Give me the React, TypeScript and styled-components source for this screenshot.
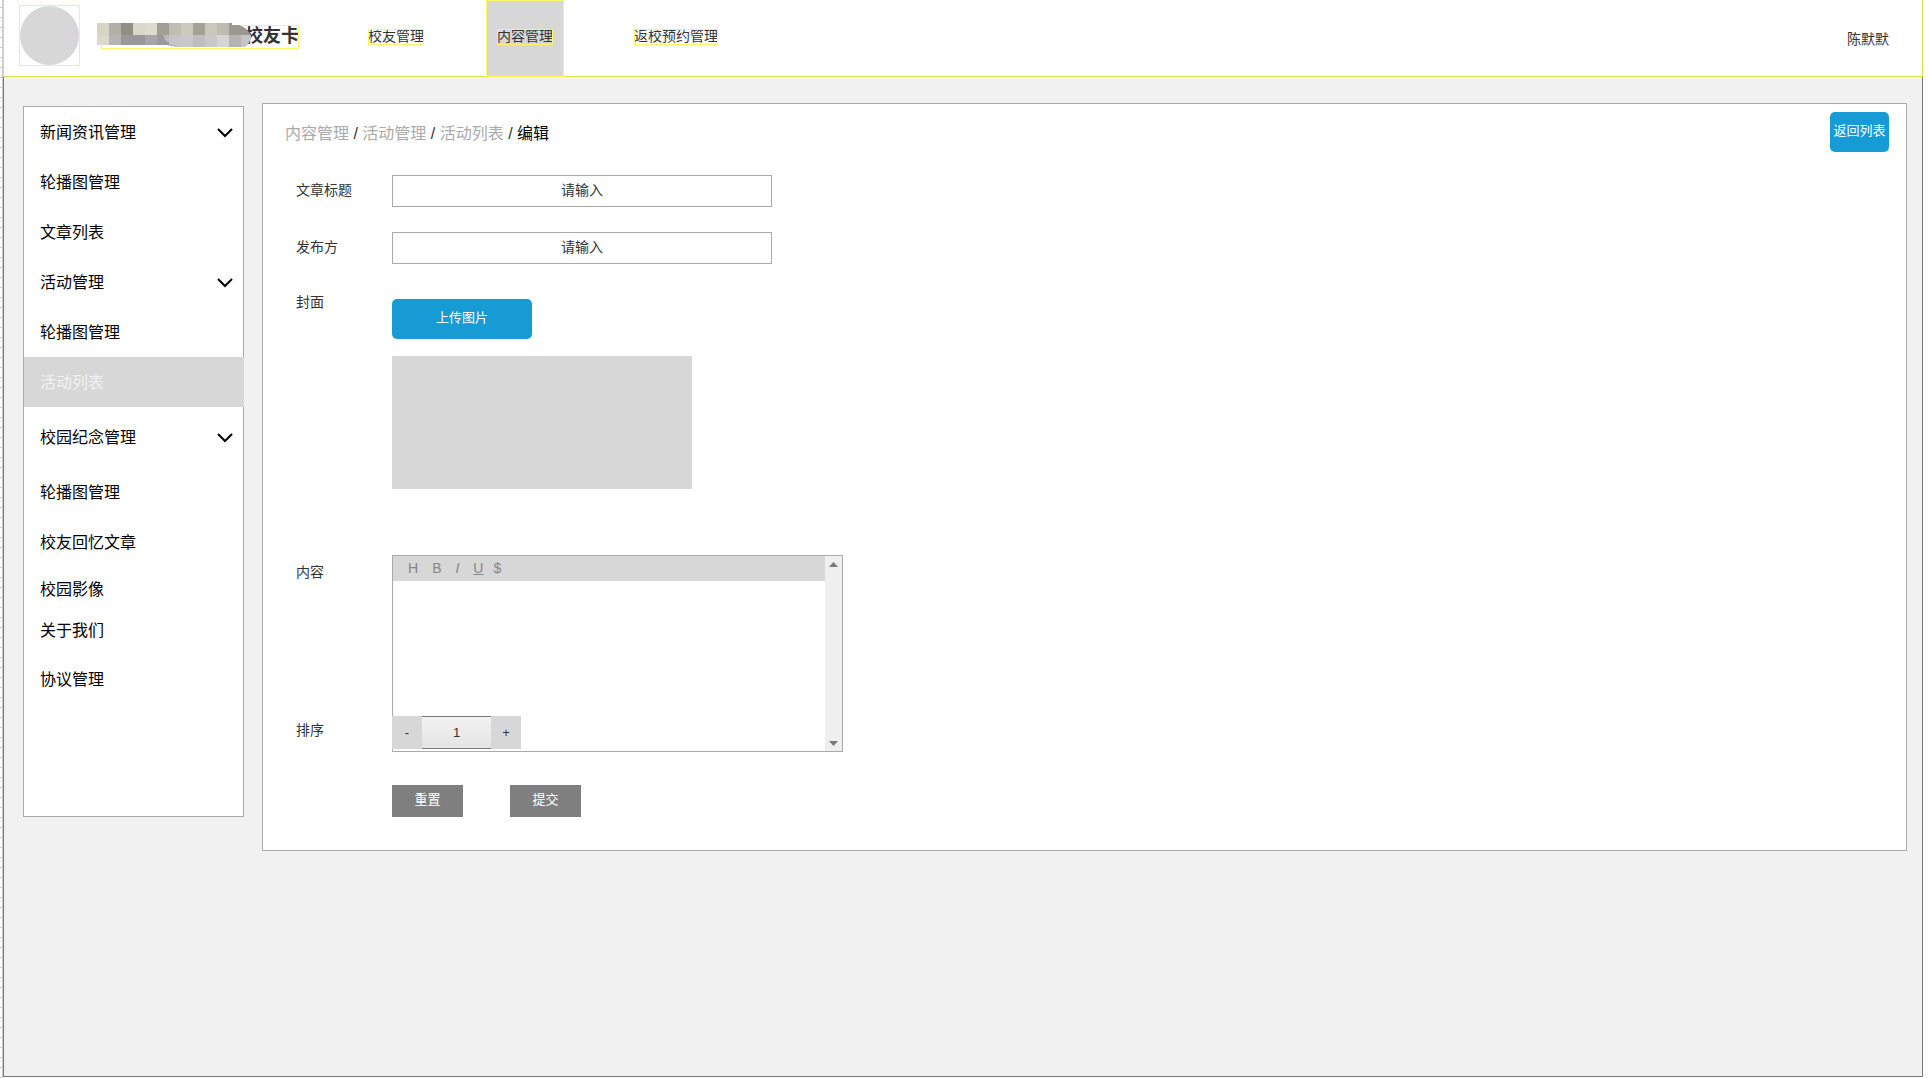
import React, { useState } from "react";
import styled, { createGlobalStyle, css } from "styled-components";

const GlobalStyle = createGlobalStyle`
  *, *::before, *::after { box-sizing: border-box; }
  body {
    margin: 0;
    background: #fff;
    color: #333;
    font-family: "Liberation Sans", "Noto Sans CJK SC", sans-serif;
    font-size: 14px;
  }
  a { color: inherit; text-decoration: none; }
  button, input, textarea { font: inherit; color: inherit; margin: 0; border-radius: 0; }
  button { border: 0; padding: 0; background: none; cursor: pointer; }
`;

const guide = "#fff568";
const line = "#aaa";

/* Canvas with a ruler along its left edge */
const Canvas = styled.div`
  display: flex;
  min-height: 100vh;
  padding: 0 6px 1px 3px;
  background:
    linear-gradient(#ccc, #ccc) 2px 0 / 1px 100% no-repeat,
    linear-gradient(#ccc, #ccc 1px, transparent 1px) 0 7px / 3px 10px repeat-y,
    #fff;
`;

const Frame = styled.div`
  flex: 1;
  min-width: 0;
  display: flex;
  flex-direction: column;
`;

const Header = styled.header`
  display: flex;
  align-items: stretch;
  height: 77px;
  padding: 0 33px 0 15px;
  border: 1px solid #e0e050;
  border-top: 0;
  background: #fff;
`;

const Avatar = styled.div`
  flex: none;
  width: 61px;
  height: 61px;
  margin-top: 5px;
  border: 1px solid ${guide};
  &::before {
    content: "";
    display: block;
    height: 100%;
    border-radius: 50%;
    background: #d7d7d7;
  }
`;

const Title = styled.h1`
  position: relative;
  flex: none;
  width: 198px;
  height: 24px;
  margin: 25px 0 0 21px;
  outline: 1px solid ${guide};
  outline-offset: -1px;
  font-size: 18px;
  line-height: 22px;
  text-align: right;
`;

const Mosaic = styled.svg`
  position: absolute;
  left: -4px;
  top: -2px;
`;

const Nav = styled.nav`
  display: flex;
  gap: 51px;
  margin-left: 58px;
`;

const NavLink = styled.a<{ $active?: boolean; $wide?: boolean }>`
  display: flex;
  align-items: center;
  height: 77px;
  padding: 0 ${(p) => (p.$wide ? 19 : 11)}px 3px;
  white-space: nowrap;
  ${(p) =>
    p.$active &&
    css`
      background: #d7d7d7;
      box-shadow: inset 0 0 0 1px ${guide};
    `}
`;

const NavText = styled.span`
  height: 16px;
  line-height: 14px;
  outline: 1px solid ${guide};
  outline-offset: -1px;
`;

const User = styled.span`
  margin-left: auto;
  line-height: 78px;
`;

const Body = styled.div`
  flex: 1;
  display: flex;
  align-items: flex-start;
  gap: 18px;
  padding: 26px 15px 26px 19px;
  border: 1px solid #797979;
  border-top: 0;
  background: #f1f1f1;
`;

const Sidebar = styled.nav`
  flex: none;
  width: 221px;
  margin-top: 3px;
  padding-bottom: 107px;
  border: 1px solid ${line};
  background: #fff;
  color: #000;
  font-size: 16px;
`;

const rowHeights = { base: 50, tall: 60, short: 44, tight: 38 };
type RowSize = keyof typeof rowHeights;

const rowStyle = css<{ $size: RowSize; $active?: boolean }>`
  display: flex;
  align-items: center;
  justify-content: space-between;
  width: 100%;
  height: ${(p) => rowHeights[p.$size]}px;
  padding: 0 10px 2px 16px;
  svg { margin-top: 3px; }
  ${(p) =>
    p.$active &&
    css`
      width: auto;
      margin-right: -1px;
      background: #d7d7d7;
      color: #f2f2f2;
    `}
`;

const SideGroup = styled.button`${rowStyle}`;
const SideLink = styled.a`${rowStyle}`;

const Panel = styled.main`
  flex: 1;
  min-width: 0;
  padding: 8px 17px 33px 22px;
  border: 1px solid ${line};
  background: #fff;
`;

const PanelTop = styled.div`
  display: flex;
  justify-content: space-between;
  align-items: center;
`;

const Crumbs = styled.div`
  padding-top: 4px;
  font-size: 16px;
  line-height: 24px;
  white-space: pre;
  a { color: #aaa; }
  strong { color: #000; font-weight: 400; }
`;

const BlueButton = styled.button<{ $width: number }>`
  display: block;
  width: ${(p) => p.$width}px;
  height: 40px;
  padding-bottom: 6px;
  border-radius: 5px;
  background: #169bd5;
  color: #fff;
  font-size: 13px;
`;

const Form = styled.form`
  margin: 23px 0 0 11px;
`;

const Field = styled.div`
  display: grid;
  grid-template-columns: 96px 1fr;
  align-items: start;
  margin-bottom: 25px;
`;

const Label = styled.label<{ $line?: number }>`
  line-height: ${(p) => p.$line ?? 30}px;
`;

const TextInput = styled.input`
  width: 380px;
  height: 32px;
  padding: 0 8px 2px;
  border: 1px solid ${line};
  background: #fff;
  text-align: center;
  &::placeholder { color: #333; opacity: 1; }
`;

const Upload = styled.div`
  display: grid;
  gap: 17px;
  padding-top: 10px;
`;

const Preview = styled.div`
  width: 300px;
  height: 133px;
  background: #d7d7d7;
`;

/* The editor spans both rows, so the stepper sits over its lower edge */
const EditorGrid = styled.div`
  display: grid;
  grid-template-columns: 96px 451px;
  grid-template-rows: 161px 36px;
  align-items: start;
  margin-top: 66px;
`;

const Editor = styled.div`
  grid-area: 1 / 2 / 3 / 3;
  display: grid;
  grid-template-columns: 1fr 17px;
  height: 100%;
  border: 1px solid ${line};
`;

const EditorMain = styled.div`
  display: flex;
  flex-direction: column;
`;

const Toolbar = styled.div`
  display: flex;
  align-items: center;
  gap: 14px;
  height: 25px;
  padding: 0 0 1px 15px;
  background: #d7d7d7;
  color: #868686;
`;

const Tool = styled.button<{ $italic?: boolean; $underline?: boolean; $near?: boolean }>`
  line-height: 16px;
  font-style: ${(p) => (p.$italic ? "italic" : "normal")};
  text-decoration: ${(p) => (p.$underline ? "underline" : "none")};
  margin-left: ${(p) => (p.$near ? -4 : 0)}px;
`;

const EditorText = styled.textarea`
  flex: 1;
  width: 100%;
  border: 0;
  padding: 8px;
  resize: none;
  background: transparent;
`;

const ScrollTrack = styled.div`
  display: flex;
  flex-direction: column;
  justify-content: space-between;
  align-items: center;
  padding: 6px 0 5px;
  background: #efefef;
  svg { display: block; }
`;

const Stepper = styled.div`
  grid-area: 2 / 2 / 3 / 3;
  z-index: 1;
  display: flex;
  width: 129px;
  height: 33px;
  font-size: 13px;
`;

const StepButton = styled.button`
  width: 30px;
  padding-bottom: 1px;
  background: #d7d7d7;
`;

const StepInput = styled.input`
  width: 69px;
  padding: 0;
  border: solid #797979;
  border-width: 1px 0;
  background: linear-gradient(#f2f2f2, #e4e4e4);
  text-align: center;
`;

const Actions = styled.div`
  display: flex;
  gap: 47px;
  margin: 33px 0 0 96px;
`;

const ActionButton = styled.button`
  width: 71px;
  height: 32px;
  padding-bottom: 6px;
  background: #7f7f7f;
  color: #fff;
  font-size: 13px;
`;

const mosaicRows = [
  ["#d5d4c5", "#b0b0a7", "#8f8f84", "#d8d8cc", "#dbdbce", "#9f9f93", "#bebeb4", "#cacabe", "#a3a393", "#c8c8bb", "#bcbcb2", "#999990", "#999990"],
  ["#dadacc", "#b5b5b5", "#999999", "#98989b", "#a6a6aa", "#9a9a9a", "#c5c5c8", "#c8c8ca", "#bebebe", "#c8c8c8", "#d5d5d5", "#b3b3b3", "#c5c5c5"],
];

const NameMosaic = () => (
  <Mosaic width="154" height="24" viewBox="0 0 154 24" aria-hidden="true">
    <clipPath id="smear">
      <path d="M0 0H135V2H142Q149 4 154 12Q154 20 148 24H82Q75 24 71 22H0Z" />
    </clipPath>
    <g clipPath="url(#smear)" shapeRendering="crispEdges">
      {mosaicRows.map((row, y) =>
        row.map((fill, x) => <rect key={`${y}-${x}`} x={x * 12} y={y * 12} width="12" height="12" fill={fill} />)
      )}
      <path d="M66 12H72V23H80Q68 20 66 12Z" fill="#b9b9bb" />
    </g>
  </Mosaic>
);

const Chevron = () => (
  <svg width="16" height="10" viewBox="0 0 16 10" aria-hidden="true">
    <path d="M1 1L8 8L15 1" fill="none" stroke="#000" strokeWidth="2" />
  </svg>
);

const menu: { text: string; size?: RowSize; group?: boolean; active?: boolean }[] = [
  { text: "新闻资讯管理", group: true },
  { text: "轮播图管理" },
  { text: "文章列表" },
  { text: "活动管理", group: true },
  { text: "轮播图管理" },
  { text: "活动列表", active: true },
  { text: "校园纪念管理", group: true, size: "tall" },
  { text: "轮播图管理" },
  { text: "校友回忆文章" },
  { text: "校园影像", size: "short" },
  { text: "关于我们", size: "tight" },
  { text: "协议管理", size: "tall" },
];

export default function App() {
  const [order, setOrder] = useState(1);

  return (
    <>
      <GlobalStyle />
      <Canvas>
        <Frame>
          <Header>
            <Avatar />
            <Title>
              校友卡
              <NameMosaic />
            </Title>
            <Nav>
              <NavLink href="#alumni"><NavText>校友管理</NavText></NavLink>
              <NavLink href="#content" $active><NavText>内容管理</NavText></NavLink>
              <NavLink href="#visits" $wide><NavText>返校预约管理</NavText></NavLink>
            </Nav>
            <User>陈默默</User>
          </Header>
          <Body>
            <Sidebar>
              {menu.map(({ text, size = "base", group, active }, i) =>
                group ? (
                  <SideGroup key={i} type="button" $size={size}>
                    {text}
                    <Chevron />
                  </SideGroup>
                ) : (
                  <SideLink key={i} href="#menu" $size={size} $active={active}>
                    {text}
                  </SideLink>
                )
              )}
            </Sidebar>
            <Panel>
              <PanelTop>
                <Crumbs>
                  <a href="#content">内容管理</a> / <a href="#events">活动管理</a> / <a href="#list">活动列表</a> / <strong>编辑</strong>
                </Crumbs>
                <BlueButton type="button" $width={59}>返回列表</BlueButton>
              </PanelTop>
              <Form onSubmit={(e) => e.preventDefault()}>
                <Field>
                  <Label htmlFor="title">文章标题</Label>
                  <TextInput id="title" placeholder="请输入" />
                </Field>
                <Field>
                  <Label htmlFor="publisher">发布方</Label>
                  <TextInput id="publisher" placeholder="请输入" />
                </Field>
                <Field>
                  <Label htmlFor="cover" $line={26}>封面</Label>
                  <Upload>
                    <BlueButton id="cover" type="button" $width={140}>上传图片</BlueButton>
                    <Preview />
                  </Upload>
                </Field>
                <EditorGrid>
                  <Label htmlFor="content" $line={34}>内容</Label>
                  <Editor>
                    <EditorMain>
                      <Toolbar>
                        <Tool type="button">H</Tool>
                        <Tool type="button">B</Tool>
                        <Tool type="button" $italic>I</Tool>
                        <Tool type="button" $underline>U</Tool>
                        <Tool type="button" $near>$</Tool>
                      </Toolbar>
                      <EditorText id="content" />
                    </EditorMain>
                    <ScrollTrack>
                      <svg width="9" height="5" viewBox="0 0 9 5" aria-hidden="true"><path d="M0 5L4.500 0L9 5Z" fill="#797979" /></svg>
                      <svg width="9" height="5" viewBox="0 0 9 5" aria-hidden="true"><path d="M0 0L4.500 5L9 0Z" fill="#797979" /></svg>
                    </ScrollTrack>
                  </Editor>
                  <Label htmlFor="order" $line={28}>排序</Label>
                  <Stepper>
                    <StepButton type="button" onClick={() => setOrder(order - 1)}>-</StepButton>
                    <StepInput
                      id="order"
                      inputMode="numeric"
                      value={order}
                      onChange={(e) => setOrder(Number(e.target.value) || 0)}
                    />
                    <StepButton type="button" onClick={() => setOrder(order + 1)}>+</StepButton>
                  </Stepper>
                </EditorGrid>
                <Actions>
                  <ActionButton type="reset">重置</ActionButton>
                  <ActionButton type="submit">提交</ActionButton>
                </Actions>
              </Form>
            </Panel>
          </Body>
        </Frame>
      </Canvas>
    </>
  );
}
